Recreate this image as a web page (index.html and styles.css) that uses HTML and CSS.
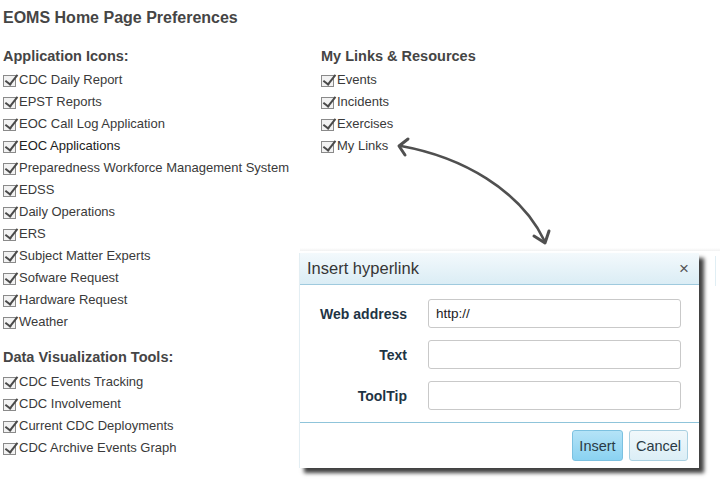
FILE: index.html
```html
<!DOCTYPE html>
<html>
<head>
<meta charset="utf-8">
<title>EOMS Home Page Preferences</title>
<link rel="stylesheet" href="styles.css">
</head>
<body>
<div class="page">
  <h1 class="title">EOMS Home Page Preferences</h1>
  <div class="columns">
    <div class="col col-left">
      <section class="group">
        <h2 class="group-title">Application Icons:</h2>
        <ul class="checklist">
          <li><span class="cb"></span>CDC Daily Report</li>
          <li><span class="cb"></span>EPST Reports</li>
          <li><span class="cb"></span>EOC Call Log Application</li>
          <li class="dark"><span class="cb"></span>EOC Applications</li>
          <li><span class="cb"></span>Preparedness Workforce Management System</li>
          <li><span class="cb"></span>EDSS</li>
          <li><span class="cb"></span>Daily Operations</li>
          <li><span class="cb"></span>ERS</li>
          <li><span class="cb"></span>Subject Matter Experts</li>
          <li><span class="cb"></span>Sofware Request</li>
          <li><span class="cb"></span>Hardware Request</li>
          <li><span class="cb"></span>Weather</li>
        </ul>
      </section>
      <section class="group group-second">
        <h2 class="group-title">Data Visualization Tools:</h2>
        <ul class="checklist">
          <li><span class="cb"></span>CDC Events Tracking</li>
          <li><span class="cb"></span>CDC Involvement</li>
          <li><span class="cb"></span>Current CDC Deployments</li>
          <li><span class="cb"></span>CDC Archive Events Graph</li>
        </ul>
      </section>
    </div>
    <div class="col col-right">
      <section class="group">
        <h2 class="group-title">My Links &amp; Resources</h2>
        <ul class="checklist">
          <li><span class="cb"></span>Events</li>
          <li><span class="cb"></span>Incidents</li>
          <li><span class="cb"></span>Exercises</li>
          <li><span class="cb"></span>My Links</li>
        </ul>
      </section>
    </div>
  </div>

  <svg class="arrow" width="720" height="480" viewBox="0 0 720 480">
    <path d="M401 146 C 462 157, 520 190, 544 240" fill="none" stroke="#505050" stroke-width="2.6" stroke-linecap="round"/>
    <path d="M408 139 L399 146 L405 155" fill="none" stroke="#505050" stroke-width="3" stroke-linecap="round" stroke-linejoin="round"/>
    <path d="M534 236 L545 243 L549 231" fill="none" stroke="#505050" stroke-width="3" stroke-linecap="round" stroke-linejoin="round"/>
  </svg>

  <div class="backdrop-edge"></div>

  <div class="dialog">
    <div class="dialog-header">
      <span class="dialog-title">Insert hyperlink</span>
      <span class="dialog-close">&#215;</span>
    </div>
    <div class="dialog-body">
      <label class="field-label">Web address</label>
      <div class="field-input">http://</div>
      <label class="field-label">Text</label>
      <div class="field-input"></div>
      <label class="field-label">ToolTip</label>
      <div class="field-input"></div>
    </div>
    <div class="dialog-footer">
      <button class="btn btn-primary">Insert</button>
      <button class="btn btn-secondary">Cancel</button>
    </div>
  </div>
</div>
</body>
</html>
```
FILE: styles.css
```css
* { box-sizing: border-box; }
html, body { margin: 0; padding: 0; background: #fff; }
body {
  font-family: "Liberation Sans", Arial, sans-serif;
  color: #333;
  width: 720px;
  height: 480px;
  overflow: hidden;
}
.page {
  position: relative;
  width: 720px;
  height: 480px;
  padding: 8px 0 0 3px;
}
.title {
  margin: 0 0 17px 0;
  font-size: 16px;
  line-height: 20px;
  font-weight: bold;
  color: #454545;
}
.columns {
  display: flex;
}
.col-left { width: 318px; }
.col-right { flex: 1; }
.group-title {
  margin: 0 0 2px 0;
  font-size: 14.5px;
  line-height: 22px;
  font-weight: bold;
  color: #454545;
}
.group-second { margin-top: 13px; }
.group-second .group-title { margin-bottom: 3px; }
.checklist {
  list-style: none;
  margin: 0;
  padding: 0;
}
.checklist li {
  display: flex;
  align-items: center;
  font-size: 13px;
  line-height: 22px;
  height: 22px;
  color: #3a3a3a;
  white-space: nowrap;
}
.checklist li.dark { color: #222; }
.cb {
  position: relative;
  display: inline-block;
  width: 16px;
  height: 15px;
  flex: none;
  margin-top: 1px;
}
.cb::before {
  content: "";
  position: absolute;
  left: 0;
  top: 2px;
  width: 13px;
  height: 12px;
  border: 1.5px solid #8a8a8a;
  background: #f2f2f2;
  box-sizing: border-box;
}
.cb::after {
  content: "";
  position: absolute;
  left: 5px;
  top: -1px;
  width: 5px;
  height: 11px;
  border-right: 2.5px solid #4a4a4a;
  border-bottom: 2.5px solid #4a4a4a;
  transform: rotate(38deg);
  transform-origin: center;
}

.arrow {
  position: absolute;
  left: 0;
  top: 0;
  pointer-events: none;
}

.backdrop-edge {
  position: absolute;
  left: 300px;
  top: 248px;
  width: 420px;
  height: 3px;
  background: linear-gradient(#ffffff, #f1f1f1);
}
.backdrop-edge::after {
  content: "";
  position: absolute;
  left: 415px;
  top: 8px;
  width: 1px;
  height: 30px;
  background: #e0eef4;
}

.dialog {
  position: absolute;
  left: 299px;
  top: 253px;
  width: 400px;
  height: 215px;
  background: #fff;
  border-left: 1px solid #e3eef3;
  box-shadow: 5px 5px 4px rgba(0,0,0,0.75);
  display: flex;
  flex-direction: column;
}
.dialog-header {
  height: 32px;
  display: flex;
  align-items: center;
  justify-content: space-between;
  padding: 0 10px 0 7px;
  background: linear-gradient(#f3f9fc, #dbedf5);
  border-bottom: 1px solid #9fcade;
}
.dialog-title {
  font-size: 16.5px;
  color: #363636;
}
.dialog-close {
  font-size: 17px;
  color: #555;
  line-height: 1;
}
.dialog-body {
  display: grid;
  grid-template-columns: 108px 1fr;
  column-gap: 20px;
  row-gap: 12px;
  padding: 14px 18px 12px 0;
  border-bottom: 1px solid #8fc4da;
  align-items: center;
}
.field-label {
  text-align: right;
  font-size: 14px;
  font-weight: bold;
  color: #1e3444;
  padding-right: 1px;
}
.field-input {
  height: 29px;
  border: 1px solid #c9c9c9;
  border-radius: 3px;
  padding: 0 7px;
  font-size: 13.5px;
  line-height: 27px;
  color: #222;
  background: #fff;
}
.dialog-footer {
  flex: 1;
  display: flex;
  justify-content: flex-end;
  align-items: center;
  gap: 6px;
  padding: 0 11px 0 0;
}
.btn {
  font-family: "Liberation Sans", Arial, sans-serif;
  font-size: 14.5px;
  height: 31px;
  border-radius: 3px;
  padding: 0;
  color: #2a3a44;
}
.btn-primary {
  width: 51px;
  background: linear-gradient(#b4e3f7, #8ad2f1);
  border: 1px solid #7cc1e0;
}
.btn-secondary {
  width: 59px;
  background: linear-gradient(#f1f8fb, #dbeef6);
  border: 1px solid #a9d0e1;
}
```
